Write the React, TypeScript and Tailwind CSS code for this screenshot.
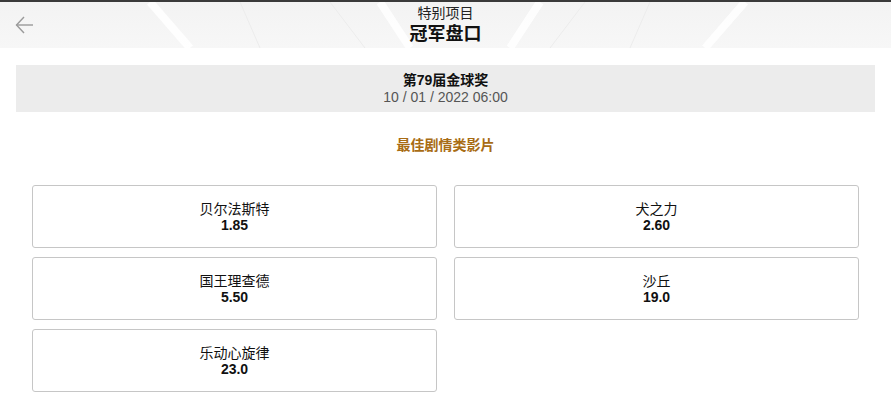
import React from "react";

type Pick = { name: string; odds: string };

const picks: Pick[] = [
  { name: "贝尔法斯特", odds: "1.85" },
  { name: "犬之力", odds: "2.60" },
  { name: "国王理查德", odds: "5.50" },
  { name: "沙丘", odds: "19.0" },
  { name: "乐动心旋律", odds: "23.0" },
];

function HeaderDecor() {
  // faint light streaks behind the title
  return (
    <svg className="pointer-events-none absolute inset-0 h-full w-full" viewBox="0 0 891 46" preserveAspectRatio="none">
      <g stroke="#ffffff" strokeWidth="8" opacity="0.9" fill="none">
        <path d="M150 0 L190 46" />
        <path d="M705 46 L745 0" />
        <path d="M380 0 L410 46" />
        <path d="M510 46 L540 0" />
      </g>
      <g stroke="#ececec" strokeWidth="1" fill="none">
        <path d="M330 0 L365 46" />
        <path d="M550 46 L585 0" />
        <path d="M240 0 L260 46" />
        <path d="M630 46 L650 0" />
      </g>
    </svg>
  );
}

function PickCard({ pick }: { pick: Pick }) {
  return (
    <button className="flex h-[63px] flex-col items-center justify-center rounded-[3px] border border-[#c6c6c6] bg-white text-sm leading-4 text-[#111]">
      <span>{pick.name}</span>
      <span className="font-bold">{pick.odds}</span>
    </button>
  );
}

export default function App() {
  return (
    <div
      className="min-h-[402px] w-full bg-white"
      style={{ fontFamily: '"Liberation Sans", "Noto Sans CJK SC", sans-serif' }}
    >
      <div className="h-[2px] bg-[#3a3a3a]" />
      <header className="relative flex h-[46px] items-center justify-center overflow-hidden bg-gradient-to-b from-[#f3f3f3] to-[#f7f7f7]">
        <HeaderDecor />
        <button className="absolute left-[15px] top-[14px] text-[#9a9a9a]" aria-label="back">
          <svg width="19" height="18" viewBox="0 0 19 18" fill="none" stroke="currentColor" strokeWidth="1.4">
            <path d="M9 1 L1.5 9 L9 17" />
            <path d="M1.5 9 H18" />
          </svg>
        </button>
        <div className="relative flex flex-col items-center">
          <div className="text-sm leading-[18px] text-[#222]">特别项目</div>
          <div className="text-lg font-bold leading-6 text-[#111]">冠军盘口</div>
        </div>
      </header>

      <div className="mx-4 mt-[17px] flex h-[47px] flex-col items-center justify-center bg-[#ececec] text-sm leading-[17px]">
        <div className="font-bold text-[#111]">第79届金球奖</div>
        <div className="text-[#555]">10 / 01 / 2022 06:00</div>
      </div>

      <div className="mt-[25px] text-center text-sm font-bold leading-[17px] text-[#a86c14]">最佳剧情类影片</div>

      <div className="mx-8 mt-[31px] grid grid-cols-2 gap-x-[17px] gap-y-[9px] pb-2">
        {picks.map((p) => (
          <PickCard key={p.name} pick={p} />
        ))}
      </div>
    </div>
  );
}
